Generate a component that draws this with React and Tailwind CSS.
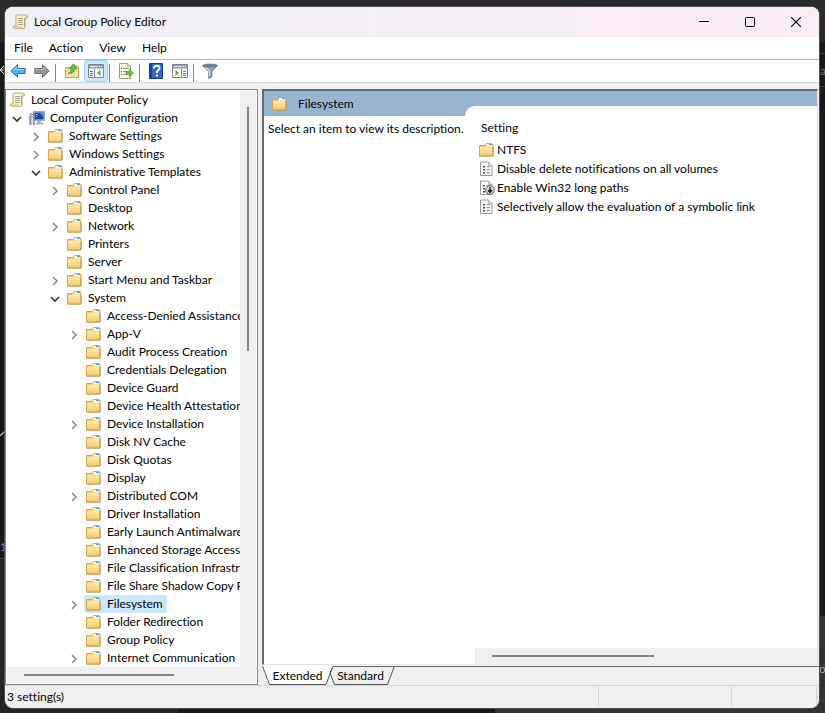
import { useState } from 'react';
import clsx from 'clsx';

const tree = [
  { name: 'Computer Configuration', icon: 'computer', open: true, children: [
    { name: 'Software Settings', open: false, children: [] },
    { name: 'Windows Settings', open: false, children: [] },
    { name: 'Administrative Templates', open: true, children: [
      { name: 'Control Panel', open: false, children: [] },
      { name: 'Desktop' },
      { name: 'Network', open: false, children: [] },
      { name: 'Printers' },
      { name: 'Server' },
      { name: 'Start Menu and Taskbar', open: false, children: [] },
      { name: 'System', open: true, children: [
        { name: 'Access-Denied Assistance' },
        { name: 'App-V', open: false, children: [] },
        { name: 'Audit Process Creation' },
        { name: 'Credentials Delegation' },
        { name: 'Device Guard' },
        { name: 'Device Health Attestation' },
        { name: 'Device Installation', open: false, children: [] },
        { name: 'Disk NV Cache' },
        { name: 'Disk Quotas' },
        { name: 'Display' },
        { name: 'Distributed COM', open: false, children: [] },
        { name: 'Driver Installation' },
        { name: 'Early Launch Antimalware' },
        { name: 'Enhanced Storage Access' },
        { name: 'File Classification Infrastructure' },
        { name: 'File Share Shadow Copy Provider' },
        { name: 'Filesystem', open: false, children: [] },
        { name: 'Folder Redirection' },
        { name: 'Group Policy' },
        { name: 'Internet Communication', open: false, children: [] },
      ] },
    ] },
  ] },
];

const settings = [
  { name: 'NTFS', icon: 'folder' },
  { name: 'Disable delete notifications on all volumes', icon: 'policy' },
  { name: 'Enable Win32 long paths', icon: 'policyDown' },
  { name: 'Selectively allow the evaluation of a symbolic link', icon: 'policy' },
];

const FolderIcon = () => (
  <svg className="w-4 h-4 shrink-0" viewBox="0 0 16 16">
    <path d="M.5 3.5h5.500l1.500-2h5.500l1 1v11.500H.5z" fill="#f2cd7c" stroke="#d3a650" />
    <path d="M7.500 2h5.500v2.500H7z" fill="#fff8e0" />
    <path d="M10 2h3v1h-3z" fill="#3f9be8" />
    <path d="M1 5h5.500l1-1h6v4H1z" fill="#fce4a3" />
    <path d="M1 8h12.500v3H1z" fill="#f9da90" />
    <path d="M1 11h12.500v3H1z" fill="#f4cf7e" />
    <path d="M.5 14h13.500V5" fill="none" stroke="#bf9343" />
  </svg>
);

const ScrollIcon = () => (
  <svg className="w-4 h-4 shrink-0" viewBox="0 0 16 16">
    <path d="M3.500 1h9.500q1.800 0 1.500 2v1h-2.500v8.500q0 2-1.700 2h-8q-1.800 0-1.800-1.500v-1h2.500v-8.500q-.8-1.500.5-2.500z" fill="#fbf3d3" stroke="#b5a878" />
    <path d="M12 4v-1.500q.3-1.500 1.500-1.300 1.200.3 1 2.800z" fill="#d9c78c" />
    <path d="M.8 12.300h8v2q-4 .5-7 0-1.200-.5-1-2z" fill="#e2d092" />
    <path d="M5 4.500h5M5 6.500h5M5 8.500h5M5 10.500h5" stroke="#a9a28b" />
    <path d="M11.500 4v8.500" stroke="#b3a678" />
  </svg>
);

const ComputerIcon = () => (
  <svg className="w-4 h-4 shrink-0" viewBox="0 0 16 16">
    <path d="M4.500 1.500h11v9h-11z" fill="#d5dbe3" stroke="#8794a5" strokeWidth=".8" />
    <path d="M5.500 2.500h9v7h-9z" fill="#0d45b8" />
    <path d="M10 2.500h4.500v5z" fill="#4b8bea" />
    <path d="M7 4h2v1H7zM7 6h1v1H7z" fill="#9cc4ff" />
    <path d="M8 11h4v1.500h2.500v2H7v-2h1z" fill="#a8b0bb" />
    <path d="M.8 6.500h4.500v8H.8z" fill="#8ea2b8" stroke="#6f7f91" strokeWidth=".8" />
    <path d="M1 4.500l1-1.500 1 1.500h1l1-1.500v3L4 7H2L1 6z" fill="#d4dbe3" stroke="#66768a" strokeWidth=".7" />
    <path d="M2.500 7h1.300v8H2.500z" fill="#eef1f5" />
  </svg>
);

const PolicyIcon = ({ down }) => (
  <svg className="w-4 h-4 shrink-0" viewBox="0 0 16 16">
    <path d="M1.500 1h8l3.500 3.500v10h-11.500z" fill="#fafafa" stroke="#9a9a9a" />
    <path d="M9.500 1v3.500H13" fill="#e2e2e2" stroke="#b5b5b5" />
    <path d="M4 5h2v1.500H4zM4 8h2v1.500H4zM4 11h2v1.500H4z" fill="#4a4a4a" />
    <path d="M7.500 5.700h3.500M7.500 8.700h3.500M7.500 11.700h3.500" stroke="#7b87a5" />
    {down && (
      <>
        <circle cx="11" cy="10" r="4.300" fill="#e4e4e4" stroke="#5c5c5c" />
        <path d="M11 7v5M8.800 10l2.200 2.400 2.200-2.400" fill="none" stroke="#1d1d1d" strokeWidth="1.500" />
      </>
    )}
  </svg>
);

const Arrow = ({ back }) => (
  <svg className="w-4 h-4" viewBox="0 0 16 16">
    {back
      ? <path d="M.8 8l6.700-6.200v3.700h7.700v5H7.500v3.700z" fill="#4db4f0" stroke="#2473c0" />
      : <path d="M15.200 8L8.500 1.800v3.700H.8v5h7.700v3.700z" fill="#979797" stroke="#6b6b6b" />}
    {back
      ? <path d="M3 7.500l3.500-3.200v2.200h7.700" fill="none" stroke="#a6e0fb" />
      : <path d="M2 6.500h7.500V4.300l3 3" fill="none" stroke="#bdbdbd" />}
  </svg>
);

const UpFolder = () => (
  <svg className="w-4 h-4" viewBox="0 0 16 16">
    <path d="M1.500 4.500h5l1-1.500h6l1 1v10.500h-13z" fill="#f6d78a" stroke="#cf9f4c" />
    <path d="M2 8.500h12v5.500H2z" fill="#fae09c" />
    <path d="M4 10.500q3.500-1 3.500-5H5.500L9.500.8l3.500 4.700h-2.300q0 5-6.700 5z" fill="#5cc63b" stroke="#3c9a22" strokeWidth=".7" />
  </svg>
);

const PaneIcon = ({ right }) => (
  <svg className="w-4 h-4" viewBox="0 0 16 16">
    <path d="M.5 1.500h15v13H.5z" fill="#fff" stroke="#7c8694" />
    <path d="M1 2h14v3H1z" fill="#8d97a5" />
    <path d="M2 3.500h8" stroke="#e5eaf0" />
    <path d="M11 3.500h1M13 3.500h1" stroke="#fff" />
    <path d="M1 5.500h14" stroke="#cdd3db" />
    {right
      ? <><path d="M9.500 6v8" stroke="#8792a0" /><path d="M11 8.500h3M11 10.500h3M11 12.500h3" stroke="#5177ad" /><path d="M3.500 7l3.500 3-3.500 3z" fill="#4cb82c" /></>
      : <><path d="M6.500 6v8" stroke="#8792a0" /><path d="M2 8.500h3M2 10.500h3M2 12.500h3" stroke="#5d7292" /><path d="M12.500 7L9 10l3.500 3z" fill="#4cb82c" /></>}
  </svg>
);

const ExportIcon = () => (
  <svg className="w-4 h-4" viewBox="0 0 16 16">
    <path d="M1.500.5h8l3 3v12h-11z" fill="#fdf8e2" stroke="#a39d88" />
    <path d="M9.500.5v3h3" fill="#e6dfc4" stroke="#b8b198" />
    <path d="M3 5.500h1M3 8.500h1M3 11.500h1" stroke="#4f4f4f" />
    <path d="M5 5.500h6M5 8.500h4M5 11.500h4" stroke="#8e91a8" />
    <path d="M8 8.500h3.500V6l4 4-4 4v-2.500H8z" fill="#5bcb3a" stroke="#3da021" strokeWidth=".6" />
  </svg>
);

const HelpIcon = () => (
  <svg className="w-4 h-4" viewBox="0 0 16 16">
    <path d="M1.500.5h13v15h-13z" fill="#3a67c4" stroke="#173d8d" />
    <path d="M2 1h2v14H2z" fill="#1b459f" />
    <path d="M6 5.500q0-2.700 2.800-2.700 2.700 0 2.700 2.400 0 1.500-1.500 2.300-1.200.8-1.200 2.500" fill="none" stroke="#fff" strokeWidth="1.900" />
    <path d="M8 11.500h2v2H8z" fill="#fff" />
  </svg>
);

const FilterIcon = () => (
  <svg className="w-4 h-4" viewBox="0 0 16 16">
    <path d="M.8 2.500h14.400l-5.400 6v5.300l-3 1.500V8.500z" fill="#8fa9c1" stroke="#5f7387" />
    <path d="M3 3.500l4.500 4.700v5" fill="none" stroke="#d3e2ee" strokeWidth="1.200" />
    <ellipse cx="8" cy="2.500" rx="7.200" ry="1.500" fill="#6d8193" stroke="#54677a" strokeWidth=".6" />
  </svg>
);

const Sep = () => <div className="w-px h-[18px] ml-px mr-1 bg-[#7f858c]" />;

const ToolButton = ({ label, active, children }) => (
  <button
    aria-label={label}
    className={clsx('w-6 h-[22px] flex items-center justify-center rounded-[3px]', active ? 'bg-[#cce8ff] border border-[#99d1ff]' : 'hover:bg-[#e5f3ff]')}
  >
    {children}
  </button>
);

function TreeNode({ node, selected, onSelect }) {
  const [open, setOpen] = useState(!!node.open);
  return (
    <li>
      <div className="flex items-center h-[18px] whitespace-nowrap">
        <div className="w-[14px] mr-[3px] flex justify-center shrink-0">
          {node.children && (
            <button aria-label={'Toggle ' + node.name} onClick={() => setOpen(!open)}>
              <svg className="w-[10px] h-[10px] mt-0.5" viewBox="0 0 10 10" fill="none" strokeWidth="1.600">
                {open ? <path d="M1 3l4 4 4-4" stroke="#333" /> : <path d="M3 1l4 4-4 4" stroke="#8c8c8c" />}
              </svg>
            </button>
          )}
        </div>
        <button
          className={clsx('h-[18px] flex items-center gap-[5px] pl-0.5 pr-1 rounded-xs', selected === node.name && 'bg-[#cce8ff]')}
          onClick={() => onSelect(node.name)}
        >
          {node.icon === 'computer' ? <ComputerIcon /> : <FolderIcon />}
          <span>{node.name}</span>
        </button>
      </div>
      {open && node.children?.length > 0 && (
        <ul className="ml-[19px]">
          {node.children.map(c => <TreeNode key={c.name} node={c} selected={selected} onSelect={onSelect} />)}
        </ul>
      )}
    </li>
  );
}

export default function App() {
  const [selected, setSelected] = useState('Filesystem');

  return (
    <div className="relative h-screen overflow-hidden bg-[#181818] pt-[7px] pl-[5px] pr-[6px] pb-[5px] font-['Lato',sans-serif] [font-variant-ligatures:none] text-[12px] leading-4 text-black">
      {/* slivers of the desktop around the window */}
      <div className="absolute inset-x-0 top-0 h-[42px] bg-[#2a2a2a]" />
      <div className="absolute right-0 top-[53px] w-2 h-[34px] border-y border-[#444]" />
      <div className="absolute right-0 bottom-0 w-[330px] h-[97px] bg-[#333]" />
      <div className="absolute left-0 bottom-0 w-[178px] h-[155px] bg-[#252525] border-t border-[#444]" />
      <span className="absolute left-[820px] top-[63px] text-[#777]">a</span>
      <span className="absolute left-[819px] top-[661px] text-[#aaa]">o</span>
      <span className="absolute left-0 top-[539px] text-[#7b7be0]">1</span>
      <svg className="absolute left-0 top-[64px] w-[5px] h-3" viewBox="0 0 5 12"><path d="M5 1L0 6l5 5M0 6h5" fill="none" stroke="#ddd" /></svg>
      <svg className="absolute left-0 top-[430px] w-[5px] h-2" viewBox="0 0 5 8"><path d="M0 6l5-5" stroke="#aaa" strokeWidth="1.500" /></svg>

      <div className="relative h-full flex flex-col rounded-lg overflow-hidden bg-[#f0f0f0] ring-1 ring-[#505050]">
        <header className="h-[30px] shrink-0 flex items-center pl-2 bg-linear-to-r from-[#f1f0f7] to-[#f9edf6]">
          <ScrollIcon />
          <h1 className="flex-1 ml-[5px]">Local Group Policy Editor</h1>
          <button aria-label="Minimize" className="w-[46px] h-full flex items-center justify-center">
            <svg className="w-[10px] h-[10px]" viewBox="0 0 10 10"><path d="M0 4.500h10" stroke="#000" /></svg>
          </button>
          <button aria-label="Maximize" className="w-[46px] h-full flex items-center justify-center">
            <svg className="w-[10px] h-[10px]" viewBox="0 0 10 10"><rect x=".5" y=".5" width="9" height="9" rx="1" fill="none" stroke="#000" /></svg>
          </button>
          <button aria-label="Close" className="w-[46px] h-full flex items-center justify-center">
            <svg className="w-[10px] h-[10px]" viewBox="0 0 10 10"><path d="M0 0l10 10M10 0L0 10" stroke="#000" strokeWidth="1.100" /></svg>
          </button>
        </header>

        <nav className="h-[23px] shrink-0 flex items-center pl-px bg-white border-b border-[#b5b5b9]">
          {['File', 'Action', 'View', 'Help'].map(m => <button key={m} className="px-2 hover:bg-[#e5f3ff]">{m}</button>)}
        </nav>

        <div className="h-[23px] shrink-0 flex items-end pl-px bg-white border-b border-[#d9d9d9]">
          <ToolButton label="Back"><Arrow back /></ToolButton>
          <ToolButton label="Forward"><Arrow /></ToolButton>
          <Sep />
          <ToolButton label="Up one level"><UpFolder /></ToolButton>
          <ToolButton label="Show or hide console tree" active><PaneIcon /></ToolButton>
          <Sep />
          <ToolButton label="Export list"><ExportIcon /></ToolButton>
          <Sep />
          <ToolButton label="Help topics"><HelpIcon /></ToolButton>
          <ToolButton label="Show or hide action pane"><PaneIcon right /></ToolButton>
          <Sep />
          <ToolButton label="Filter"><FilterIcon /></ToolButton>
        </div>

        <main className="flex-1 min-h-0 flex gap-1 pt-[6px]">
          <aside className="w-[253px] shrink-0 flex flex-col p-px bg-white border border-[#828790]">
            <div className="flex-1 min-h-0 flex">
              <div className="flex-1 min-w-0 overflow-hidden pl-[3px]">
                <button className="h-[18px] flex items-center gap-[5px]">
                  <ScrollIcon />
                  <span>Local Computer Policy</span>
                </button>
                <ul>
                  {tree.map(n => <TreeNode key={n.name} node={n} selected={selected} onSelect={setSelected} />)}
                </ul>
              </div>
              <div className="w-4 shrink-0 bg-[#f0f0f0] flex justify-center pt-4">
                <div className="w-0.5 h-[244px] bg-[#858585]" />
              </div>
            </div>
            <div className="h-4 shrink-0 bg-[#f0f0f0] flex items-center pl-[17px]">
              <div className="w-[150px] h-0.5 bg-[#858585]" />
            </div>
          </aside>

          <section className="flex-1 min-w-0 flex flex-col">
            <div className="flex-1 min-h-0 flex flex-col border-t-2 border-l-2 border-[#696969] border-r border-r-[#e3e3e3] border-b border-b-[#e3e3e3] mr-px bg-[#99b4d1]">
              <div className="flex-1 min-h-0 flex">
                <div className="w-[201px] shrink-0 flex flex-col">
                  <div className="h-[25px] shrink-0 flex items-center gap-[10px] pl-2">
                    <FolderIcon />
                    <h2>Filesystem</h2>
                  </div>
                  <p className="flex-1 bg-white pt-[5px] pl-1 whitespace-nowrap">Select an item to view its description.</p>
                </div>
                <div className="flex-1 min-w-0 flex flex-col pt-[15px]">
                  <div className="flex-1 min-h-0 flex flex-col pl-[10px] bg-white rounded-tl-[10px]">
                    <table className="ml-1 text-left">
                      <thead>
                        <tr><th className="h-[34px] pt-[10px] pl-0.5 pb-0 font-normal">Setting</th></tr>
                      </thead>
                      <tbody>
                        {settings.map(s => (
                          <tr key={s.name} className="h-[19px]">
                            <td className="p-0">
                              <div className="flex items-center gap-0.5">
                                {s.icon === 'folder' ? <FolderIcon /> : <PolicyIcon down={s.icon === 'policyDown'} />}
                                <span>{s.name}</span>
                              </div>
                            </td>
                          </tr>
                        ))}
                      </tbody>
                    </table>
                    <div className="mt-auto h-4 shrink-0 bg-[#f0f0f0] flex items-center pl-[17px]">
                      <div className="w-[162px] h-0.5 bg-[#858585]" />
                    </div>
                  </div>
                </div>
              </div>
            </div>
            <div className="h-px shrink-0 bg-white" />
            <div role="tablist" className="relative h-[19px] shrink-0 flex items-center border-t border-[#646464]">
              <svg className="absolute left-0 -top-px w-[134px] h-[19px]" viewBox="0 0 134 19">
                <path d="M0 0l7 18.500h57L71 0z" fill="#fff" />
                <path d="M.5 0l7 18.500h56.500L70.500 1" fill="none" stroke="#555" />
                <path d="M71 1l-3 6 4.500 11.500h53L132.500 0" fill="none" stroke="#555" />
              </svg>
              <button role="tab" aria-selected="true" className="relative w-[71px] text-center">Extended</button>
              <button role="tab" aria-selected="false" className="relative w-[55px] text-center">Standard</button>
            </div>
          </section>
        </main>

        <footer className="h-[23px] shrink-0 flex items-center border-t border-[#d7d7d7]">
          <div className="flex-1 pl-0.5">3 setting(s)</div>
          <div className="w-[133px] h-5 border-l border-[#d7d7d7]" />
          <div className="w-[86px] h-5 border-x border-[#d7d7d7] mr-0.5" />
        </footer>
      </div>
    </div>
  );
}
